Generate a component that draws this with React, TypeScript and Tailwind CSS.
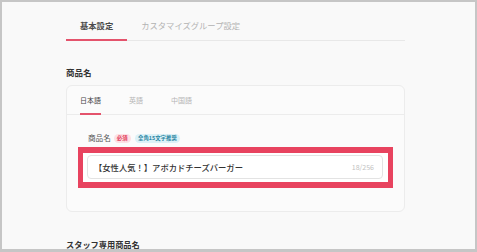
const font = { fontFamily: '"Noto Sans CJK JP", "Noto Sans", sans-serif' };

function Badge({ label, tone }: { label: string; tone: "red" | "blue" }) {
  const cls =
    tone === "red"
      ? "bg-[#fde0e5] text-[#e2415c] px-[3px]"
      : "bg-[#dcf1f7] text-[#2b86a3] px-[3.5px]";
  return (
    <span
      className={`${cls} rounded-full h-[9px] leading-[9px] text-[5.4px] font-bold flex items-center`}
    >
      {label}
    </span>
  );
}

export default function App() {
  return (
    <div
      style={font}
      className="w-[477px] h-[252px] overflow-hidden bg-[#f9f9f9] border-t-2 border-x-2 border-b-[3px] border-[#c6c6c6]"
    >
      <div className="ml-[64px] w-[339px]">
        {/* top tabs */}
        <div className="flex border-b border-[#e8e8e8]">
          <div className="-mb-px px-[14px] pt-[17px] pb-[8px] border-b-2 border-[#e4536c] text-[8.3px] leading-[12px] font-bold text-[#4a4a4a]">
            基本設定
          </div>
          <div className="-mb-px px-[14px] pt-[17px] pb-[8px] border-b-2 border-transparent text-[8.3px] leading-[12px] text-[#b3b3b3]">
            カスタマイズグループ設定
          </div>
        </div>

        <h2 className="mt-[25px] text-[8.5px] leading-[12px] font-bold text-[#333]">
          商品名
        </h2>

        {/* card */}
        <div className="mt-[7px] bg-[#fbfbfb] border border-[#ececec] rounded-[6px] pb-[23px]">
          <div className="flex gap-[28px] pl-[13px] border-b border-[#ececec]">
            <div className="-mb-px pt-[8px] pb-[7px] border-b-2 border-[#e4536c] text-[7px] leading-[12px] text-[#444]">
              日本語
            </div>
            <div className="-mb-px pt-[8px] pb-[7px] border-b-2 border-transparent text-[7px] leading-[12px] text-[#b5b5b5]">
              英語
            </div>
            <div className="-mb-px pt-[8px] pb-[7px] border-b-2 border-transparent text-[7px] leading-[12px] text-[#b5b5b5]">
              中国語
            </div>
          </div>

          <div className="px-[11px] pt-[18px]">
            <div className="flex items-center h-[10px] pl-[10px] mb-[4px]">
              <span className="text-[7.6px] leading-[10px] text-[#555] mr-[3px]">商品名</span>
              <Badge label="必須" tone="red" />
              <span className="w-[4px]" />
              <Badge label="全角15文字推奨" tone="blue" />
            </div>

            <div className="border-[#e8435f] border-x-[5px] border-t-[6px] border-b-[6px] pl-[4px] pr-[5px] pt-[2px] pb-[3px] bg-white">
              <div className="h-[24px] bg-white border border-[#e3e3e3] rounded-[4px] flex items-center justify-between pl-[6px] pr-[8px]">
                <span className="text-[8.3px] font-medium text-[#333]">
                  【女性人気！】アボカドチーズバーガー
                </span>
                <span className="text-[7px] text-[#c2c2c2]">18/256</span>
              </div>
            </div>
          </div>
        </div>

        <h2 className="mt-[26px] text-[8.2px] leading-[12px] font-bold text-[#333]">
          スタッフ専用商品名
        </h2>
      </div>
    </div>
  );
}
